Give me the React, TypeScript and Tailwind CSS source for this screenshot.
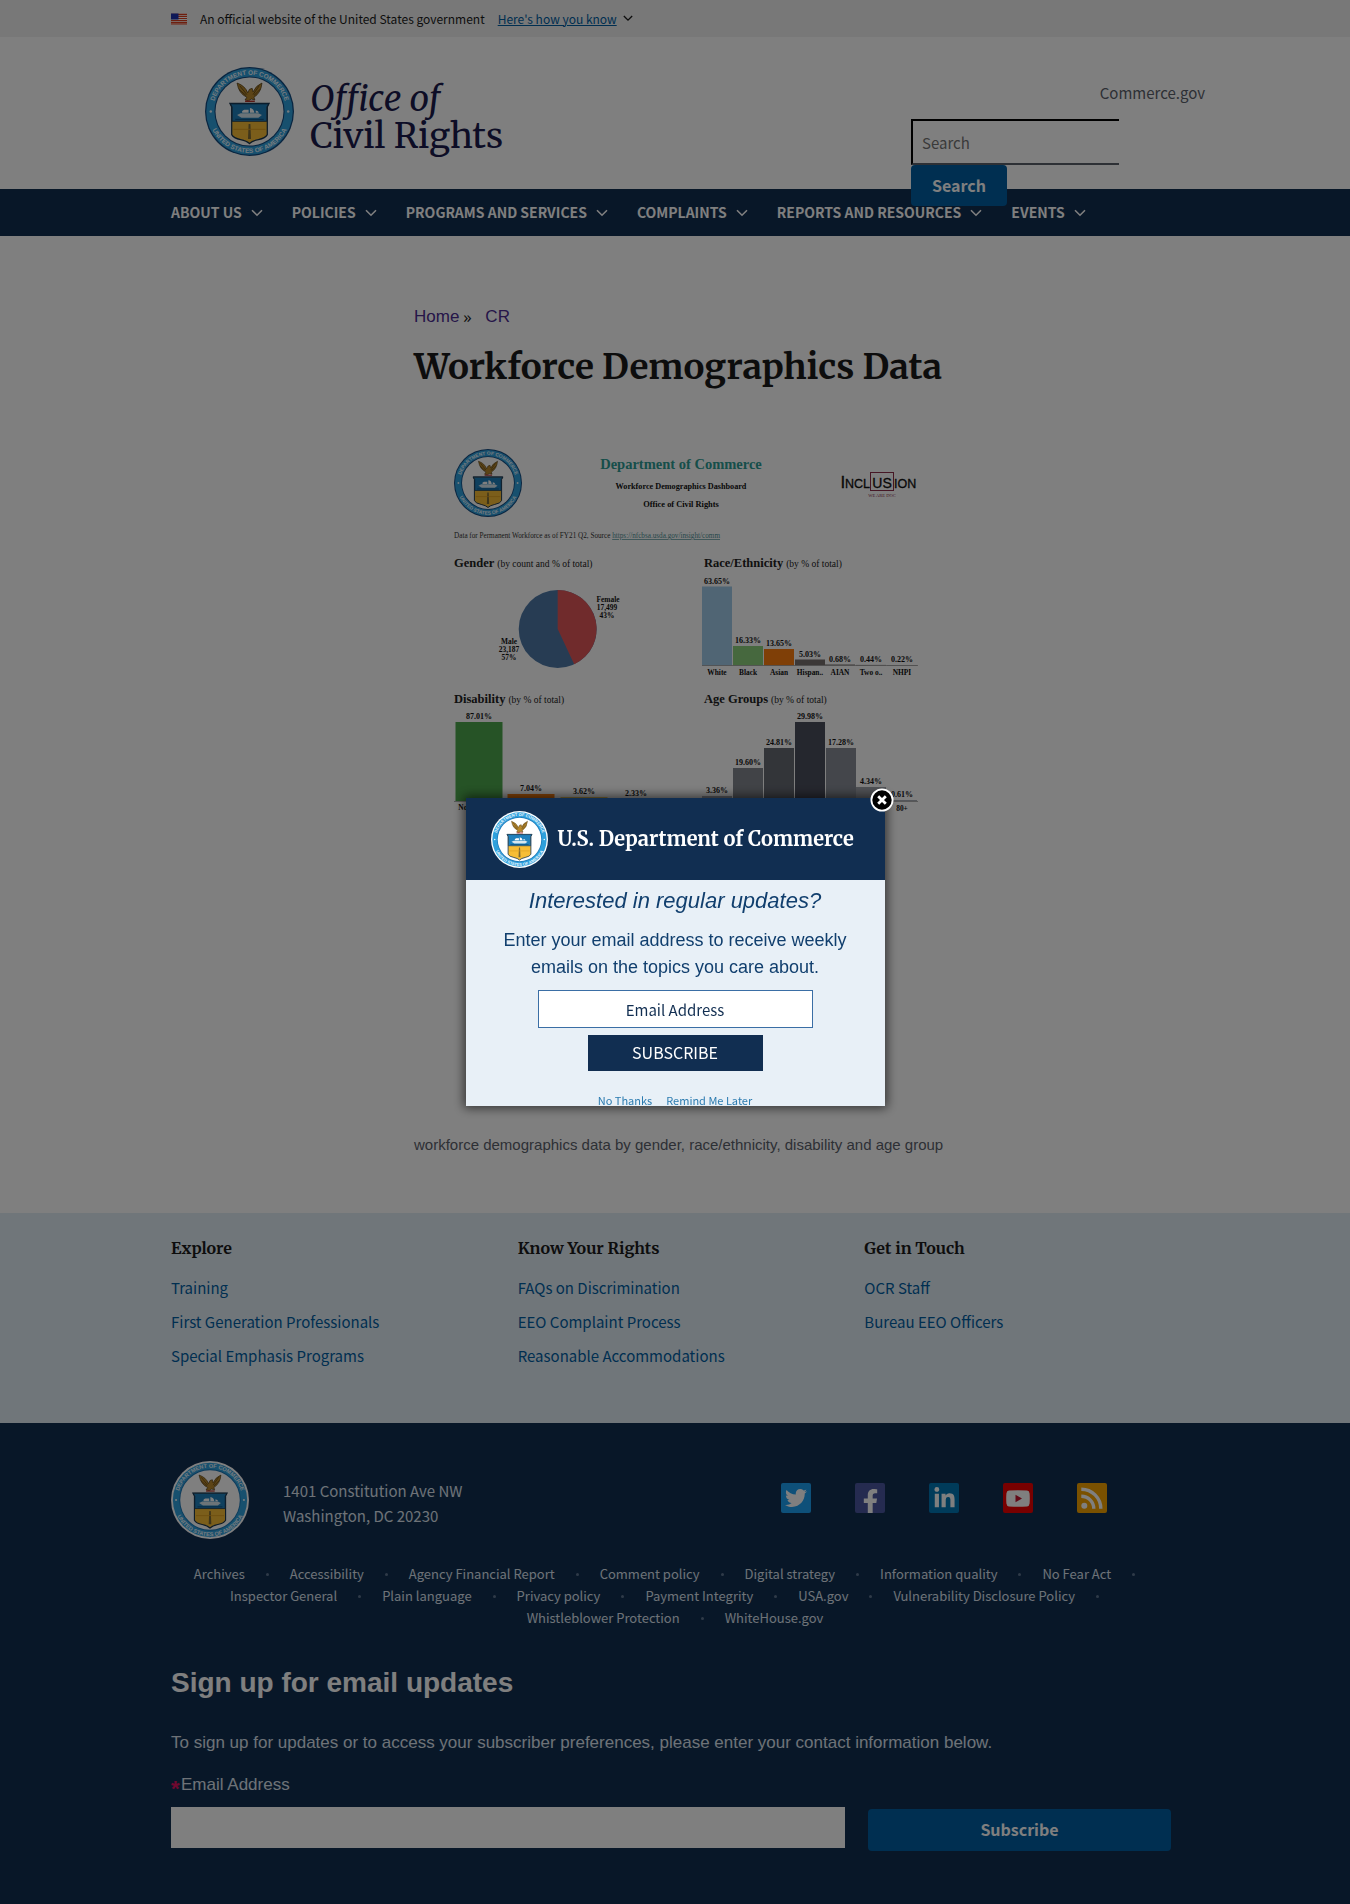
import React from "react";
import { FaTwitter, FaFacebookF, FaLinkedinIn } from "react-icons/fa";

const sans = "font-['Noto_Sans_CJK_SC','Open_Sans',sans-serif]";
const serif = "font-[Merriweather,'DejaVu_Serif_Condensed','DejaVu_Serif',serif]";
const arial = "font-['Liberation_Sans',sans-serif]";

function SealDrawing({ id, ring }: { id: string; ring?: boolean }) {
  return (
    <g>
      <defs>
        <path id={`${id}-top`} d="M8.7 50 A41.3 41.3 0 0 1 91.3 50" />
        <path id={`${id}-bottom`} d="M3.5 50 A46.5 46.5 0 0 0 96.5 50" />
      </defs>
      <circle cx="50" cy="50" r="50" fill={ring ? "#ffffff" : "#134a80"} />
      <circle cx="50" cy="50" r={ring ? 47.6 : 48.6} fill="#2fa0dc" />
      <circle cx="50" cy="50" r="39.4" fill={ring ? "#1b75b5" : "#134a80"} />
      <circle cx="50" cy="50" r="38.2" fill="#ffffff" />
      <g fill="#eaf7ff" fontFamily="Liberation Sans, sans-serif" fontWeight="700" fontSize="7.2" textAnchor="middle">
        <text><textPath href={`#${id}-top`} startOffset="50%">DEPARTMENT OF COMMERCE</textPath></text>
        <text><textPath href={`#${id}-bottom`} startOffset="50%">UNITED STATES OF AMERICA</textPath></text>
      </g>
      <circle cx="6.5" cy="50" r="1.4" fill="#eaf7ff" />
      <circle cx="93.5" cy="50" r="1.4" fill="#eaf7ff" />
      <path d="M36 18 Q45 21 48 29 L50 25 L53 24 L54 28 Q57 21 64 18 Q63 29 55 34 L56 37 L52 36 L49 38 L45 37 L47 34 Q38 30 36 18Z" fill="#b8892c" stroke="#4c3712" strokeWidth="0.8" />
      <path d="M39 21 L47 31 M61 21 L54 31 M38 25 L46 32 M62 25 L55 32" stroke="#4c3712" strokeWidth="0.8" />
      <path d="M45 38.5 H56" stroke="#b3332b" strokeWidth="1.6" />
      <path d="M28 41 H72 L70 45 V76 Q68 80 60 81.5 Q53 83 50 86 Q47 83 40 81.5 Q32 80 30 76 V45Z" fill="#f7bd36" stroke="#17344f" strokeWidth="1.4" />
      <path d="M28.6 41.4 H71.4 L69.5 45 V61 H30.5 V45Z" fill="#1f80bd" stroke="#17344f" strokeWidth="1" />
      <path d="M36 54 L40 52 H60 L64 54 L60 57 H41Z" fill="#d8e8f0" />
      <path d="M42 51.5 Q40.5 49.5 44 48 H49 V51.5Z M50.5 51.5 V46 Q55 46.5 55.5 51.5Z M57 51.5 V49 Q60 49.5 60.5 51.5Z" fill="#ffffff" />
      <path d="M34 58.8 H66" stroke="#0d4f80" strokeWidth="1.2" />
      <path d="M49 64 H51 L51.7 81 H48.3Z" fill="#7d6a34" />
      <path d="M32 70 H68" stroke="#d99a1e" strokeWidth="1" />
    </g>
  );
}

function Seal({ id, className, ring }: { id: string; className: string; ring?: boolean }) {
  return (
    <svg viewBox="0 0 100 100" className={className} role="img" aria-label="Department of Commerce seal">
      <SealDrawing id={id} ring={ring} />
    </svg>
  );
}

function Chevron({ className }: { className: string }) {
  return (
    <svg viewBox="0 0 12 8" className={className} fill="none" stroke="currentColor" aria-hidden="true">
      <path d="M1 1.2 L6 6.2 L11 1.2" strokeWidth="1.6" />
    </svg>
  );
}

function Banner() {
  return (
    <div className="bg-[#f0f0f0]">
      <div className="mx-auto flex h-[37px] max-w-[1040px] items-center px-4 text-[12px]">
        <svg viewBox="0 0 16 11" className="mr-[13px] h-[12px] w-4" aria-hidden="true">
          <rect width="16" height="11" fill="#fff" />
          <path d="M0 .8H16M0 2.9H16M0 5H16M0 7.1H16M0 9.2H16" stroke="#db3e1f" strokeWidth="1.2" />
          <path d="M0 10.5H16" stroke="#db3e1f" />
          <rect width="7.5" height="6" fill="#1e33b1" />
        </svg>
        <p className="text-[#1b1b1b]">An official website of the United States government</p>
        <button className="ml-[13px] flex items-center gap-1.5 text-[#005ea2]">
          <span className="underline">Here's how you know</span>
          <Chevron className="w-[10px] text-[#1b1b1b]" />
        </button>
      </div>
    </div>
  );
}

function Header() {
  return (
    <header className="mx-auto flex max-w-[1040px] justify-between px-4">
      <a href="#home" className="ml-[34px] flex items-start pt-[30px]">
        <Seal id="head" className="h-[89px] w-[89px]" />
        <span className={`ml-4 block pt-[14px] text-[35px] leading-[37px] text-[#1a1b4d] ${serif}`}>
          <em>Office of</em>
          <br />
          Civil Rights
        </span>
      </a>
      <div className="-mr-[26px] w-[294px] pt-11">
        <a href="#commerce" className="block text-right text-[15px] leading-6 text-[#5b616b]">Commerce.gov</a>
        <form className="relative z-10 mt-[14px] -mb-[17px] w-[208px]" onSubmit={(e) => e.preventDefault()}>
          <input
            type="search"
            aria-label="Search"
            placeholder="Search"
            className="block h-[46px] w-full border-t-2 border-b-2 border-l-2 border-t-black border-b-[#5b616b] border-l-black bg-white px-[9px] text-[15px] placeholder:text-[#757575]"
          />
          <button className="block h-[41px] rounded-[4px] bg-[#005ea2] px-[21px] pb-0.5 text-[16px] font-bold text-white">Search</button>
        </form>
      </div>
    </header>
  );
}

const navItems = ["ABOUT US", "POLICIES", "PROGRAMS AND SERVICES", "COMPLAINTS", "REPORTS AND RESOURCES", "EVENTS"];

function Nav() {
  return (
    <nav className="bg-[#112e51]">
      <ul className="relative z-20 mx-auto flex h-[47px] max-w-[1040px] items-center gap-[29px] px-4">
        {navItems.map((n) => (
          <li key={n}>
            <button className="flex items-center gap-[9px] text-[14px] font-bold whitespace-nowrap text-white">
              {n}
              <Chevron className="w-3" />
            </button>
          </li>
        ))}
      </ul>
    </nav>
  );
}

const race: [string, string, number, number, string][] = [
  ["White", "63.65%", 717, 79, "#a0cbe8"],
  ["Black", "16.33%", 748, 19.5, "#8cd17d"],
  ["Asian", "13.65%", 779, 16.5, "#ff7f0e"],
  ["Hispan..", "5.03%", 810, 6, "#79706e"],
  ["AIAN", "0.68%", 840, 1, "#79706e"],
  ["Two o..", "0.44%", 871, 0.6, "#79706e"],
  ["NHPI", "0.22%", 902, 0.4, "#79706e"],
];
const age: [string, number, number, string][] = [
  ["3.36%", 717, 5, "#a9adb5"],
  ["19.60%", 748, 33, "#83878e"],
  ["24.81%", 779, 53, "#666a73"],
  ["29.98%", 810, 79, "#4b4e5c"],
  ["17.28%", 841, 53, "#888d97"],
  ["4.34%", 871, 14, "#a0a4ab"],
  ["0.61%", 902, 1, "#a9adb5"],
];
const disability: [string, number, number, string][] = [
  ["87.01%", 479, 79, "#4ca64c"],
  ["7.04%", 531, 7, "#ff7f0e"],
  ["3.62%", 584, 4, "#f1ce63"],
  ["2.33%", 636, 2, "#79706e"],
];

function ChartTitle({ x, y, title, note }: { x: number; y: number; title: string; note: string }) {
  return (
    <text x={x} y={y} fontSize="12.5" fontWeight="700" fill="#222">
      {title}
      <tspan fontSize="9.5" fontWeight="400" dx="3">{note}</tspan>
    </text>
  );
}

function Dashboard() {
  return (
    <svg viewBox="414 436 534 681" className="block w-full" role="img" aria-label="Workforce demographics dashboard" fontFamily="Liberation Serif, serif">
      <svg x="454" y="449" width="68" height="68" viewBox="0 0 100 100">
        <SealDrawing id="dash" />
      </svg>
      <g textAnchor="middle" fontWeight="700">
        <text x="681" y="469" fontSize="14.5" fill="#2c9c94">Department of Commerce</text>
        <text x="681" y="489" fontSize="8.2" fill="#111">Workforce Demographics Dashboard</text>
        <text x="681" y="507" fontSize="8.4" fill="#111">Office of Civil Rights</text>
      </g>
      <g fontFamily="Liberation Sans, sans-serif" fill="#111" stroke="#111" strokeWidth="0.3" fontSize="12.5">
        <text x="840.5" y="488" fontSize="17">I</text>
        <text x="845" y="488">NCL</text>
        <text x="882" y="488" textAnchor="middle" fontSize="14">US</text>
        <text x="894" y="488">ION</text>
      </g>
      <rect x="870.5" y="472.5" width="23" height="18" fill="none" stroke="#8c2f4a" />
      <text x="882" y="497" fontSize="4.5" textAnchor="middle" fill="#8c2f4a">WE ARE DOC</text>
      <text x="454" y="538" fontSize="7.2" fill="#333">
        Data for Permanent Workforce as of FY21 Q2, Source{" "}
        <tspan fill="#4e8f95" textDecoration="underline">https://nfcbsa.usda.gov/insight/comm</tspan>
      </text>

      <ChartTitle x={454} y={567} title="Gender" note="(by count and % of total)" />
      <ChartTitle x={704} y={567} title="Race/Ethnicity" note="(by % of total)" />
      <ChartTitle x={454} y={703} title="Disability" note="(by % of total)" />
      <ChartTitle x={704} y={703} title="Age Groups" note="(by % of total)" />

      <circle cx="557.7" cy="629" r="39" fill="#4e79a7" />
      <path d="M557.7 629 V590 A39 39 0 0 1 574.2 664.3Z" fill="#e15759" />
      <g fontSize="7.4" fontWeight="700" textAnchor="middle" fill="#111">
        <text x="608" y="602">Female</text>
        <text x="607" y="610">17,499</text>
        <text x="607" y="618">43%</text>
        <text x="509" y="644">Male</text>
        <text x="509" y="652">23,187</text>
        <text x="509" y="660">57%</text>
        {race.map(([name, value, x, h, fill]) => (
          <g key={name}>
            <rect x={x - 15} y={665.5 - h} width="30" height={h} fill={fill} />
            <text x={x} y={662.5 - h} fontSize="8">{value}</text>
            <text x={x} y="675">{name}</text>
          </g>
        ))}
        <path d="M702 665.5 H918" stroke="#999" strokeWidth="0.8" />
        {disability.map(([value, x, h, fill]) => (
          <g key={value}>
            <rect x={x - 23.5} y={801 - h} width="47" height={h} fill={fill} />
            <text x={x} y={798 - h} fontSize="8">{value}</text>
          </g>
        ))}
        {age.map(([value, x, h, fill]) => (
          <g key={value}>
            <rect x={x - 15} y={801 - h} width="30" height={h} fill={fill} />
            <text x={x} y={798 - h} fontSize="8">{value}</text>
          </g>
        ))}
        <path d="M454 801.5 H668 M702 801.5 H918" stroke="#999" strokeWidth="0.8" />
        <text x="479" y="810">No Disability</text>
        <text x="902" y="811">80+</text>
      </g>
    </svg>
  );
}

function Main() {
  return (
    <main className={`mx-auto max-w-[1040px] pt-[69px] pb-14 pl-[259px] ${arial}`}>
      <nav aria-label="Breadcrumb" className="flex text-[17px] leading-6">
        <a href="#home" className="text-[#4c2c92]">Home</a>
        <span className="mx-1 w-[18px] font-['Open_Sans',sans-serif] text-[#1b1b1b]">»</span>
        <a href="#cr" className="text-[#4c2c92]">CR</a>
      </nav>
      <h1 className={`mt-4 text-[35px] leading-[44px] font-bold text-[#1b1b1b] ${serif}`}>Workforce Demographics Data</h1>
      <figure className="mt-[47px] max-w-[534px]">
        <Dashboard />
        <figcaption className="mt-4 text-[15px] leading-6 whitespace-nowrap text-[#5b616b]">
          workforce demographics data by gender, race/ethnicity, disability and age group
        </figcaption>
      </figure>
    </main>
  );
}

const columns = [
  { title: "Explore", links: ["Training", "First Generation Professionals", "Special Emphasis Programs"] },
  { title: "Know Your Rights", links: ["FAQs on Discrimination", "EEO Complaint Process", "Reasonable Accommodations"] },
  { title: "Get in Touch", links: ["OCR Staff", "Bureau EEO Officers"] },
];

function LinkColumns() {
  return (
    <section className="bg-[#e1ecf5]">
      <div className="mx-auto grid max-w-[1040px] grid-cols-3 pt-[23px] pb-[55px]">
        {columns.map((c) => (
          <div key={c.title} className="px-4">
            <h2 className={`text-[16px] leading-6 font-bold text-[#1b1b1b] ${serif}`}>{c.title}</h2>
            <ul className="mt-4 flex flex-col gap-[10px] text-[15px] leading-6">
              {c.links.map((l) => (
                <li key={l}><a href="#link" className="text-[#005ea2]">{l}</a></li>
              ))}
            </ul>
          </div>
        ))}
      </div>
    </section>
  );
}

const menu = [
  "Archives", "Accessibility", "Agency Financial Report", "Comment policy", "Digital strategy", "Information quality",
  "No Fear Act", "Inspector General", "Plain language", "Privacy policy", "Payment Integrity", "USA.gov",
  "Vulnerability Disclosure Policy", "Whistleblower Protection", "WhiteHouse.gov",
];

function Social() {
  const box = "flex h-[30px] w-[30px] justify-center overflow-hidden rounded-[2px] text-white";
  return (
    <div className="mr-[72px] flex gap-11 pb-1">
      <a href="#twitter" aria-label="Twitter" className={`${box} items-center bg-[#1da1f2]`}><FaTwitter size={22} /></a>
      <a href="#facebook" aria-label="Facebook" className={`${box} items-end bg-[#4a56a0]`}><FaFacebookF size={25} className="-mb-px" /></a>
      <a href="#linkedin" aria-label="LinkedIn" className={`${box} items-center bg-[#0077b5]`}><FaLinkedinIn size={23} /></a>
      <a href="#youtube" aria-label="YouTube" className={`${box} items-center bg-[#f00000]`}>
        <svg viewBox="0 0 24 17" className="w-6" aria-hidden="true">
          <path d="M3 .6 Q12 -.3 21 .6 Q23.3 .8 23.6 3.5 Q24 8.5 23.6 13.5 Q23.3 16.2 21 16.4 Q12 17.3 3 16.4 Q.7 16.2 .4 13.5 Q0 8.5 .4 3.5 Q.7 .8 3 .6Z" fill="currentColor" />
          <path d="M9.5 4.8 L16 8.5 L9.5 12.2Z" fill="#c4122f" />
        </svg>
      </a>
      <a href="#rss" aria-label="RSS" className={`${box} items-center bg-[#f5a300]`}>
        <svg viewBox="0 0 24 24" className="w-6" fill="none" stroke="currentColor" strokeWidth="3.4" aria-hidden="true">
          <circle cx="4.3" cy="19.7" r="3" fill="currentColor" stroke="none" />
          <path d="M1.3 10.2 A12.5 12.5 0 0 1 13.8 22.7 M1.3 3.2 A19.5 19.5 0 0 1 20.8 22.7" />
        </svg>
      </a>
    </div>
  );
}

function Footer() {
  return (
    <footer className="bg-[#112e51] pt-[38px] pb-[53px] text-[#dce4ef]">
      <div className="mx-auto max-w-[1040px] px-4">
        <div className="flex items-center">
          <Seal id="foot" ring className="h-[78px] w-[78px]" />
          <address className="ml-[34px] flex-1 pt-1.5 text-[15px] leading-[25px] not-italic">
            1401 Constitution Ave NW
            <br />
            Washington, DC 20230
          </address>
          <Social />
        </div>
        <ul className="mt-6 flex flex-wrap justify-center text-[13px] leading-[22px]">
          {menu.map((m, i) => (
            <li key={m} className="flex items-center">
              <a href="#menu">{m}</a>
              {i < menu.length - 1 && <span className="mx-[21px] h-[3px] w-[3px] rounded-full bg-[#5f7590]" />}
            </li>
          ))}
        </ul>
        <form className={`mt-9 pr-2 ${arial}`} onSubmit={(e) => e.preventDefault()}>
          <h2 className="text-[28px] leading-9 font-bold text-white">Sign up for email updates</h2>
          <p className="mt-7 text-[17px] leading-7">
            To sign up for updates or to access your subscriber preferences, please enter your contact information below.
          </p>
          <label htmlFor="signup-email" className="mt-4 flex text-[17px] leading-6">
            <span className="w-[10px] pt-1 text-[22px] font-bold text-[#e0115f]">*</span>
            Email Address
          </label>
          <div className="mt-[6px] grid grid-cols-[674fr_303fr] gap-[23px]">
            <input id="signup-email" type="email" className="h-[41px] min-w-0 bg-white px-2 text-black" />
            <button className={`mt-[2px] h-[42px] rounded-[4px] bg-[#005ea2] pb-0.5 text-[16px] font-bold text-white ${sans}`}>
              Subscribe
            </button>
          </div>
        </form>
      </div>
    </footer>
  );
}

function SubscribeDialog() {
  return (
    <div className="fixed inset-0 z-50 flex items-center justify-center bg-black/50">
      <div role="dialog" aria-label="Email updates" className="relative w-[419px] bg-[#e8f0f7] text-center text-[#113f6e] shadow-[0_0_10px_2px_rgba(0,0,0,0.6)]">
        <button aria-label="Close" className="absolute -top-[10px] -right-[9px] h-6 w-6">
          <svg viewBox="0 0 24 24" aria-hidden="true">
            <circle cx="12" cy="12" r="10.6" fill="#000" stroke="#fff" strokeWidth="1.8" />
            <path d="M8.2 8.2 L15.8 15.8 M15.8 8.2 L8.2 15.8" stroke="#fff" strokeWidth="2.8" />
          </svg>
        </button>
        <div className="flex h-[82px] items-center bg-[#112e51] pl-[25px]">
          <Seal id="dialog" ring className="h-[57px] w-[57px]" />
          <p className={`ml-[10px] text-[20px] font-bold text-white ${serif}`}>U.S. Department of Commerce</p>
        </div>
        <h2 className={`pt-[7px] text-[22px] leading-[28px] italic ${arial}`}>Interested in regular updates?</h2>
        <p className={`mx-auto mt-3 w-[350px] text-[18px] leading-[27px] ${arial}`}>
          Enter your email address to receive weekly emails on the topics you care about.
        </p>
        <input
          type="email"
          aria-label="Email Address"
          placeholder="Email Address"
          className="mx-auto mt-[9px] block h-[38px] w-[275px] border border-[#3a6ea5] bg-white text-center text-[15px] placeholder:text-[#112e51]"
        />
        <button className="mx-auto mt-[7px] block h-[36px] w-[175px] bg-[#112e51] pb-0.5 text-[16px] text-white">SUBSCRIBE</button>
        <div className="mt-[23px] flex h-[12px] items-center justify-center gap-[14px] text-[11px] text-[#2b7bb0]">
          <button>No Thanks</button>
          <button>Remind Me Later</button>
        </div>
      </div>
    </div>
  );
}

export default function App() {
  return (
    <div className={`bg-white ${sans}`}>
      <Banner />
      <Header />
      <Nav />
      <Main />
      <LinkColumns />
      <Footer />
      <SubscribeDialog />
    </div>
  );
}
